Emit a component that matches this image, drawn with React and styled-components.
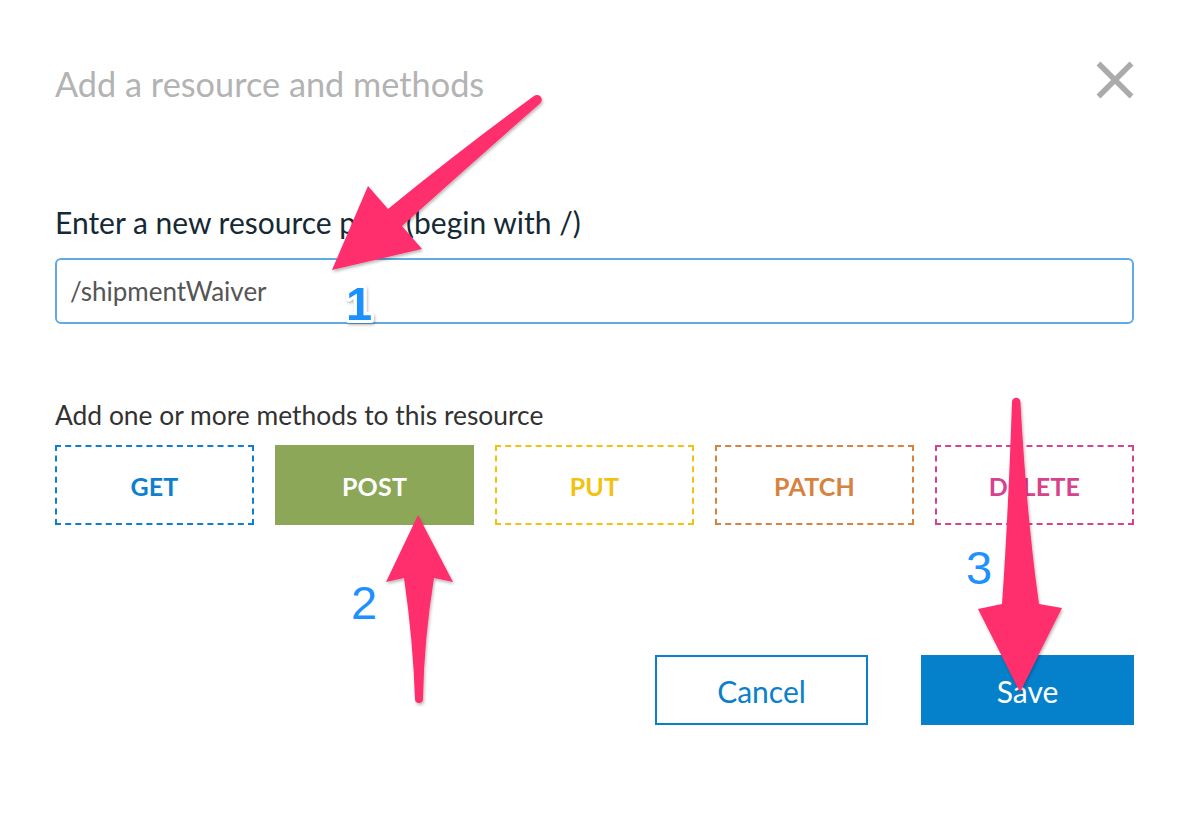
import React from "react";
import styled, { createGlobalStyle } from "styled-components";

const GlobalStyle = createGlobalStyle`
  html, body { margin: 0; padding: 0; background: #ffffff; }
  body { font-family: Lato, "Open Sans", sans-serif; }
  * { box-sizing: border-box; }
`;

const Dialog = styled.div`
  position: relative;
  width: 1188px;
  height: 826px;
  padding: 0 54px 0 55px;
  background: #ffffff;
`;

const Header = styled.div`
  display: flex;
  justify-content: space-between;
  align-items: flex-start;
  padding-top: 64px;
`;

const Title = styled.h2`
  margin: 0;
  font-size: 34.3px;
  line-height: 40px;
  font-weight: 400;
  color: #b3b3b3;
`;

const CloseButton = styled.button`
  border: 0;
  background: none;
  padding: 0;
  margin: -3px 0 0 0;
  width: 38px;
  height: 38px;
  display: flex;
  align-items: center;
  justify-content: center;
  cursor: pointer;
`;

const FieldLabel = styled.label`
  display: block;
  margin-top: ${(p) => p.$top}px;
  font-size: ${(p) => p.$size}px;
  line-height: ${(p) => p.$lh}px;
  color: ${(p) => p.$color};
`;

const TextInput = styled.input`
  display: block;
  width: 100%;
  height: 66px;
  margin-top: 18px;
  padding: 0 13px;
  border: 2px solid #62aae6;
  border-radius: 6px;
  font-family: Lato, "Open Sans", sans-serif;
  font-size: 26px;
  color: #555555;
  outline: none;
`;

const MethodGrid = styled.div`
  display: grid;
  grid-template-columns: repeat(5, 1fr);
  gap: 21px;
  margin-top: 13px;
`;

const MethodButton = styled.button`
  height: 80px;
  border: 2px dashed ${(p) => p.$color};
  background: ${(p) => (p.$active ? p.$color : "#ffffff")};
  ${(p) => (p.$active ? "border-style: solid;" : "")}
  color: ${(p) => (p.$active ? "#ffffff" : p.$color)};
  font-family: Lato, "Open Sans", sans-serif;
  font-weight: 700;
  font-size: 25px;
  letter-spacing: 0.2px;
  padding-top: 3px;
  cursor: pointer;
`;

const Footer = styled.div`
  display: flex;
  justify-content: flex-end;
  gap: 53px;
  margin-top: 130px;
`;

const ActionButton = styled.button`
  width: 213px;
  height: 70px;
  border: 2px solid #0a80cb;
  background: ${(p) => (p.$primary ? "#0581cc" : "#ffffff")};
  color: ${(p) => (p.$primary ? "#ffffff" : "#0a80cb")};
  font-family: Lato, "Open Sans", sans-serif;
  font-size: 30px;
  padding-top: 2px;
  cursor: pointer;
`;

const Annotations = styled.svg`
  position: absolute;
  left: 0;
  top: 0;
  width: 1188px;
  height: 826px;
  pointer-events: none;
`;

const Step = styled.text`
  font-family: "Liberation Sans", Arial, sans-serif;
  fill: #1e90ff;
`;

const methods = [
  { name: "GET", color: "#0d7fcd" },
  { name: "POST", color: "#8ba757", active: true },
  { name: "PUT", color: "#f1c20f" },
  { name: "PATCH", color: "#d8823f" },
  { name: "DELETE", color: "#d6428c" },
];

export default function App() {
  return (
    <>
      <GlobalStyle />
      <Dialog>
        <Header>
          <Title>Add a resource and methods</Title>
          <CloseButton aria-label="Close">
            <svg width="38" height="38" viewBox="0 0 38 38">
              <path d="M2.5 2.5 L35.5 35.5 M35.5 2.5 L2.5 35.5" stroke="#ababab" strokeWidth="5.5" fill="none" />
            </svg>
          </CloseButton>
        </Header>

        <FieldLabel $top={100} $size={30} $lh={36} $color="#152935">
          Enter a new resource path (begin with /)
        </FieldLabel>
        <TextInput defaultValue="/shipmentWaiver" />

        <FieldLabel $top={74} $size={26.4} $lh={34} $color="#323232">
          Add one or more methods to this resource
        </FieldLabel>
        <MethodGrid>
          {methods.map((m) => (
            <MethodButton key={m.name} $color={m.color} $active={m.active}>
              {m.name}
            </MethodButton>
          ))}
        </MethodGrid>

        <Footer>
          <ActionButton>Cancel</ActionButton>
          <ActionButton $primary>Save</ActionButton>
        </Footer>

        <Annotations viewBox="0 0 1188 826">
          <defs>
            <filter id="shadow" x="-20%" y="-20%" width="140%" height="140%">
              <feDropShadow dx="1" dy="2" stdDeviation="1.5" floodColor="#000" floodOpacity="0.28" />
            </filter>
          </defs>
          <g fill="#ff2d6d" filter="url(#shadow)">
            <path d="M332 270 L368 186 L388 209 Q460 150 534 96 A4.6 4.6 0 0 1 540 103.5 Q470 165 402 226 L422 249 Z" />
            <path d="M418 515 L453 582 L434 578 Q424 640 423 699 A4 4 0 0 1 415 699 Q413 640 404 578 L386 582 Z" />
            <path d="M1012 402 A4.2 4.2 0 0 1 1020.4 402 Q1027 520 1039 604 L1062 608 L1020 692 L978 609 L1002 604 Q1008 520 1012 402 Z" />
          </g>
          <Step x="346" y="320" fontSize="47" fontWeight="700" stroke="#ffffff" strokeWidth="6" paintOrder="stroke" strokeLinejoin="round" filter="url(#shadow)">1</Step>
          <Step x="351" y="619" fontSize="47">2</Step>
          <Step x="966" y="584" fontSize="47">3</Step>
        </Annotations>
      </Dialog>
    </>
  );
}
